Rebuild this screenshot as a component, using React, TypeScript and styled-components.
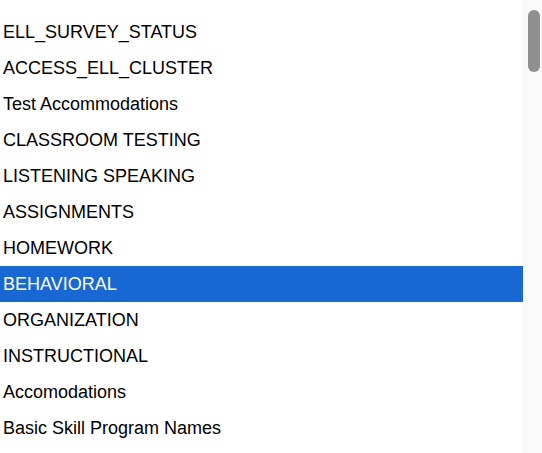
import styled, { createGlobalStyle } from 'styled-components'

const GlobalStyle = createGlobalStyle`
  html, body {
    margin: 0;
    padding: 0;
    background: #ffffff;
    overflow: hidden;
  }
`

const Frame = styled.div`
  display: flex;
  width: 542px;
  height: 453px;
  overflow: hidden;
  font-family: "Liberation Sans", Arial, sans-serif;
`

const List = styled.ul`
  flex: 1;
  list-style: none;
  margin: 0;
  padding: 14px 0 0 0;
`

const Item = styled.li<{ $selected?: boolean }>`
  padding: 9px 3px;
  font-size: 18px;
  line-height: 18px;
  color: ${p => (p.$selected ? '#ffffff' : '#000000')};
  background: ${p => (p.$selected ? '#1967d2' : 'transparent')};
  white-space: nowrap;
`

const Track = styled.div`
  width: 19px;
  background: #fafafa;
  display: flex;
  flex-direction: column;
  align-items: flex-end;
  padding: 10px 2px 0 0;
  box-sizing: border-box;
`

const Thumb = styled.div`
  width: 12px;
  height: 62px;
  border-radius: 6px;
  background: #8f8f8f;
`

const items = [
  'ELL_SURVEY_STATUS',
  'ACCESS_ELL_CLUSTER',
  'Test Accommodations',
  'CLASSROOM TESTING',
  'LISTENING SPEAKING',
  'ASSIGNMENTS',
  'HOMEWORK',
  'BEHAVIORAL',
  'ORGANIZATION',
  'INSTRUCTIONAL',
  'Accomodations',
  'Basic Skill Program Names',
]

function App() {
  return (
    <>
      <GlobalStyle />
      <Frame>
        <List>
          {items.map(name => (
            <Item key={name} $selected={name === 'BEHAVIORAL'}>
              {name}
            </Item>
          ))}
        </List>
        <Track>
          <Thumb />
        </Track>
      </Frame>
    </>
  )
}

export default App
